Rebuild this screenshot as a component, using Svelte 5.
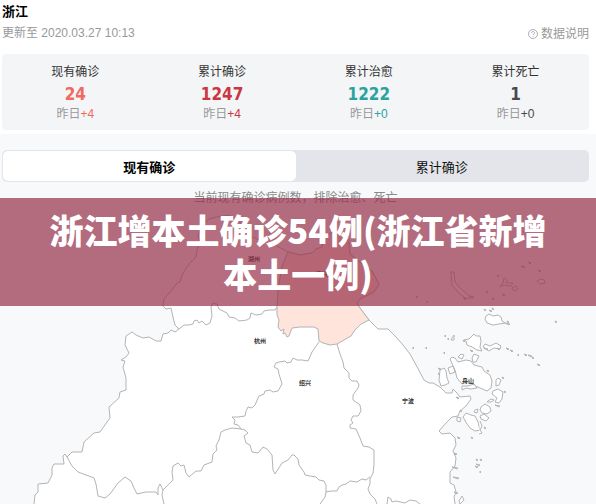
<script>
	const stats = [
		{ label: '现有确诊', value: 24, diff: '+4', tone: 'current' },
		{ label: '累计确诊', value: 1247, diff: '+4', tone: 'total' },
		{ label: '累计治愈', value: 1222, diff: '+0', tone: 'cured' },
		{ label: '累计死亡', value: 1, diff: '+0', tone: 'dead' }
	];

	const tabs = ['现有确诊', '累计确诊'];
	let activeTab = 0;

	const province =
		'M179 329L175 325L173 317L171 308L166 309L163 306L164 299L172 290L177 283L180 282L183 273L190 263L196 257L197 250L200 243L198 235L202 226L209 219L217 217L228 215L238 219L244 229L250 236L262 241L275 245L288 252L300 255L312 253L316 249L322 247L323 239L332 232L345 235L349 243L350 254L360 262L372 271L379 284L374 292L360 299L357 304L369 320L378 329L388 329L396 337L403 345L410 354L415 363L424 380L429 383L433 383L440 387L446 393L452 393L453 389L457 393L460 397L470 396L471 399L466 406L460 411L458 416L452 417L446 423L439 431L442 434L450 433L455 438L456 445L453 451L456 458L455 466L450 472L450 483L454 485L456 492L454 497L456 510L30 510L34 504L35 495L38 492L38 484L48 483L52 475L52 468L54 464L64 464L63 456L65 454L67 457L72 452L82 452L84 442L94 433L100 432L107 422L110 418L109 407L119 398L120 392L126 390L126 378L123 367L125 361L121 360L126 357L129 353L125 345L126 336L132 332L136 335L143 338L149 337L156 341L161 341L163 334L168 333L171 330L175 332Z';

	const jiaxing =
		'M277 307L278 290L280 278L282 266L288 252L300 255L312 253L316 249L322 247L323 239L332 232L345 235L349 243L350 254L360 262L372 271L379 284L374 292L360 299L357 304L369 320L361 324L355 330L351 336L344 340L337 344L330 345L323 343L319 341L318 329L314 327L300 327L292 328L289 336L287 337L285 333L283 334L284 329L281 331L278 327L279 320L277 315Z';

	const borders = [
		// 湖州 / 杭州
		'M179 329L184 325L189 325L193 324L194 321L197 320L199 323L202 321L206 325L210 323L212 316L211 307L213 303L217 304L219 309L227 313L229 317L235 318L239 321L247 320L250 318L251 313L256 315L262 314L264 311L269 310L275 310L277 307',
		// 杭州 / 绍兴 / 金华
		'M319 342L312 352L308 361L302 360L297 360L293 358L291 362L287 363L285 361L279 362L276 363L274 367L278 369L279 374L282 384L278 391L273 392L270 390L265 391L264 394L259 396L255 405L252 408L248 407L246 411L245 416L238 417L232 417L235 420L234 424L238 425L241 429L245 430L248 433L244 436L246 443L250 445L252 452L258 453L263 447L267 449L272 455L273 470L275 474L282 463L288 460L292 455L294 455L298 459L299 465L304 472L305 475L310 476L316 477L319 480L324 481L326 485L326 492L325 497L320 504',
		'M241 429L232 428L225 430L221 432L219 440L216 446L217 450L213 454L212 462L204 465L201 471L196 471L189 477L186 473L184 465L181 466L178 463L173 466L172 472L173 480L167 486L163 490L160 484L158 488L158 495L156 492L152 492L146 492L137 494L134 488L131 481L125 477L118 483L110 494L105 498L98 496L96 484L94 478L86 475L78 472L72 466L67 457',
		'M163 490L162 495L164 504',
		// 绍兴 / 宁波
		'M337 344L340 354L343 362L344 368L349 373L349 378L352 381L357 381L359 385L358 388L353 395L353 400L360 405L361 411L358 416L353 416L351 420L353 423L350 425L350 428L356 429L360 438L363 446L369 447L374 450L374 465L373 473L370 479L370 484L368 489L370 494L375 499L377 504',
		'M326 492L331 491L337 491L339 487L342 485L346 484L350 481L357 482L362 479L366 480L370 477',
		'M387 504L388 497L391 499L392 502L396 501L405 503L410 500L416 501L420 504'
	];

	const islands = [
		'M450 359L452 357L455 358L458 362L466 360L471 361L474 365L482 367L484 371L490 375L492 381L491 388L487 391L480 388L473 385L469 381L462 384L457 378L455 370Z',
		'M440 370L444 368L446 371L447 378L449 383L445 385L441 386L439 380Z',
		'M448 368L453 366L455 372L450 374Z',
		'M464 340L469 339L474 334L476 336L480 336L481 341L480 347L482 351L477 350L472 347L467 345L466 341Z',
		'M486 316L489 314L493 316L498 315L501 317L502 321L505 323L499 324L493 325L487 323L485 319Z',
		'M483 347L485 344L490 346L496 343L501 346L500 349L494 348L489 351Z',
		'M472 358L474 354L479 356L476 362L473 362Z',
		'M458 357L461 354L464 355L462 359Z',
		'M496 380L498 378L501 380L499 385L496 386Z',
		'M493 391L498 389L503 392L502 399L499 403L495 402L497 398L492 394Z',
		'M488 401L491 399L494 400L491 402L487 402Z',
		'M481 407L485 404L490 407L491 411L487 414L482 413L480 410Z',
		'M463 417L466 413L471 415L475 416L478 422L480 430L475 431L470 428L467 424Z',
		'M480 416L484 414L489 418L486 421L481 419Z',
		'M462 386L468 386L474 384L477 388L471 389L466 388L462 390Z',
		'M457 417L461 418L460 422L457 421Z',
		'M475 410L478 409L477 413L474 412Z',
		'M480 421L482 426L480 430L482 433L479 434',
		'M459 501L462 496L464 500L460 504Z',
		// 嵊泗
		'M451 272L454 272L455 282L460 288L467 294L471 298L465 298L458 292L452 285Z',
		'M504 278L507 280L506 283L513 283L511 286L504 285L500 287L503 283Z',
		'M537 281L541 279L544 280L545 283L540 284Z',
		'M512 288L516 286L518 289L514 291Z',
		'M452 338L454 335L454 340L451 340Z'
	];

	// [x, y, length] of the smallest reefs
	const reefs = [
		[484, 309, 2], [489, 310, 3], [492, 308, 2], [505, 323, 5], [507, 321, 2], [555, 321, 2],
		[445, 335, 1], [448, 338, 1], [463, 340, 2], [413, 347, 1], [426, 347, 1], [444, 352, 1],
		[484, 348, 4], [497, 348, 3], [506, 348, 3], [510, 350, 3], [518, 354, 1], [524, 354, 3],
		[528, 355, 4], [532, 357, 2], [537, 364, 3], [487, 370, 2], [502, 377, 2], [504, 391, 2],
		[438, 368, 3], [438, 373, 2], [456, 397, 3], [460, 410, 2], [495, 405, 5], [484, 427, 2],
		[471, 437, 2], [457, 437, 3], [454, 453, 3], [452, 467, 6], [453, 477, 6], [454, 492, 4],
		[476, 459, 2], [480, 459, 2], [475, 466, 3], [476, 464, 4], [480, 471, 1], [463, 298, 3],
		[470, 296, 4], [492, 298, 2], [486, 291, 2], [416, 296, 2], [427, 301, 1], [497, 275, 2],
		[521, 266, 4], [528, 262, 3], [538, 270, 3], [502, 294, 3], [431, 504, 1], [470, 350, 3]
	];

	const cities = [
		{ name: '湖州', x: 254, y: 261 },
		{ name: '嘉兴', x: 322, y: 276 },
		{ name: '杭州', x: 260, y: 343 },
		{ name: '绍兴', x: 305, y: 385 },
		{ name: '宁波', x: 408, y: 403 },
		{ name: '舟山', x: 468, y: 383 }
	];
</script>

<main class="page">
	<section class="summary">
		<header class="top">
			<div>
				<h1>浙江</h1>
				<p class="updated">更新至 2020.03.27 10:13</p>
			</div>
			<a class="help" href="#note">
				<svg viewBox="0 0 10 10" width="10" height="10" aria-hidden="true">
					<circle cx="5" cy="5" r="4.5" />
					<path d="M3.5 4C3.5 2 6.5 2 6.5 4C6.5 5 5 5 5 6M5 7V7.7" />
				</svg>
				<span>数据说明</span>
			</a>
		</header>

		<div class="stats">
			{#each stats as stat}
				<div class="stat {stat.tone}">
					<span class="label">{stat.label}</span>
					<strong>{stat.value}</strong>
					<span class="diff">昨日<em>{stat.diff}</em></span>
				</div>
			{/each}
		</div>
	</section>

	<section class="map-section">
		<div class="tabs" role="tablist">
			{#each tabs as tab, i}
				<button
					type="button"
					role="tab"
					aria-selected={activeTab === i}
					class:active={activeTab === i}
					on:click={() => (activeTab = i)}
				>
					{tab}
				</button>
			{/each}
		</div>
		<p class="note" id="note">当前现有确诊病例数，排除治愈、死亡</p>

		<svg class="map" viewBox="0 207 596 297" role="img" aria-label="浙江">
			<path class="land" d={province} />
			<path class="land hot" d={jiaxing} />
			{#each borders as d}
				<path class="border" {d} />
			{/each}
			{#each islands as d}
				<path class="island" {d} />
			{/each}
			{#each reefs as [x, y, len]}
				<path class="island" d="M{x} {y}l{len} 1l-1 1z" />
			{/each}
			{#each cities as city}
				<text x={city.x} y={city.y}>{city.name}</text>
			{/each}
		</svg>
	</section>

	<div class="banner">
		<h2>浙江增本土确诊54例(浙江省新增本土一例)</h2>
	</div>
</main>

<style>
	:global(body) {
		margin: 0;
		background: #f8f9fb;
	}

	.page {
		position: relative;
		overflow: hidden;
		font-family: 'Liberation Sans', 'Noto Sans CJK SC', sans-serif;
		font-size: 12px;
		color: #333;
	}

	h1,
	h2,
	p {
		margin: 0;
	}

	.summary {
		padding: 2px 7px 4px 2px;
		background: #fff;
	}

	.top {
		display: flex;
		justify-content: space-between;
		align-items: flex-end;
		margin-bottom: 10px;
	}

	h1 {
		font-size: 13px;
		line-height: 20px;
		color: #000;
	}

	.updated {
		line-height: 22px;
		color: #999;
	}

	.help {
		display: flex;
		align-items: center;
		gap: 3px;
		line-height: 20px;
		color: #999;
		text-decoration: none;
	}

	.help svg {
		fill: none;
		stroke: #999;
		stroke-width: 0.8;
	}

	.stats {
		display: grid;
		grid-template-columns: repeat(4, 1fr);
		padding: 8px 0;
		border-radius: 4px;
		background: #f4f5f7;
	}

	.stat {
		display: flex;
		flex-direction: column;
		align-items: center;
		line-height: 20px;
	}

	.stat strong {
		font-family: 'DejaVu Sans Condensed', 'Open Sans', sans-serif;
		font-size: 17px;
		line-height: 24px;
	}

	.stat .diff {
		line-height: 16px;
		color: #999;
	}

	.stat em {
		font-style: normal;
	}

	.current strong,
	.current em {
		color: #ef6a60;
	}

	.total strong,
	.total em {
		color: #cb3642;
	}

	.cured strong,
	.cured em {
		color: #2aa3a0;
	}

	.dead strong,
	.dead em {
		color: #4a484e;
	}

	.map-section {
		padding-top: 16px;
		background: #f8f9fb;
	}

	.tabs {
		display: flex;
		margin: 0 7px 0 2px;
		padding: 1px;
		border-radius: 5px;
		background: #e3e5ea;
	}

	.tabs button {
		flex: 1;
		height: 30px;
		padding: 0;
		border: 0;
		border-radius: 5px;
		background: none;
		font-family: inherit;
		font-size: 13px;
		color: #111;
		cursor: pointer;
	}

	.tabs button.active {
		background: #fff;
		font-weight: bold;
		color: #000;
	}

	.note {
		padding: 7px 7px 0 2px;
		line-height: 18px;
		text-align: center;
		color: #8a8a8a;
	}

	.map {
		display: block;
		width: 100%;
	}

	.map path {
		stroke: #b4b4b4;
		stroke-width: 1;
		stroke-linejoin: round;
	}

	.land,
	.map .island {
		fill: #fff;
	}

	.land.hot {
		fill: #fee4da;
	}

	.map .border {
		fill: none;
	}

	.map .island {
		stroke: #b4b4b4;
	}

	.map text {
		font-size: 6px;
		font-weight: bold;
		text-anchor: middle;
		fill: #333;
	}

	.banner {
		position: absolute;
		top: 198px;
		left: 0;
		right: 0;
		padding: 10px 40px;
		background: rgba(149, 47, 73, 0.7);
	}

	.banner h2 {
		font-family: 'Noto Sans CJK SC', sans-serif;
		font-size: 34px;
		font-weight: 900;
		line-height: 44px;
		text-align: center;
		color: #fff;
	}
</style>
